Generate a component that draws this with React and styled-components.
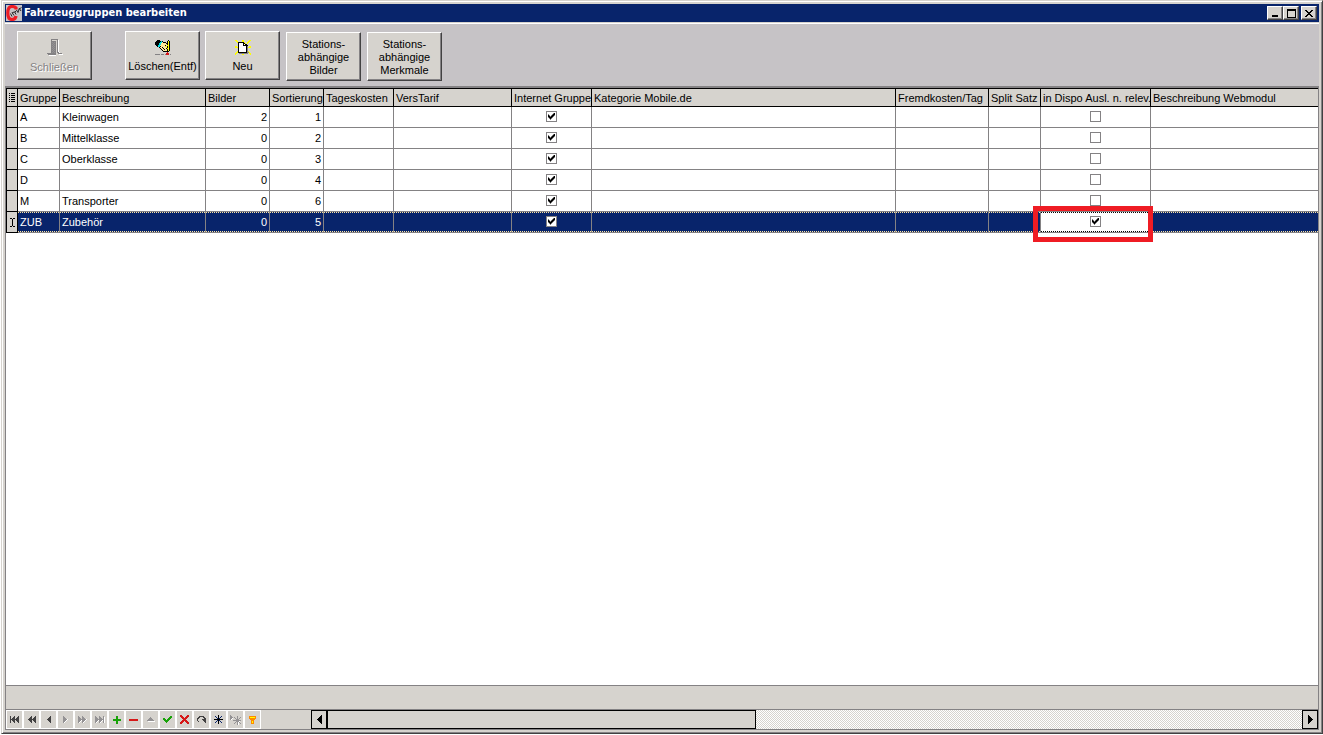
import React from "react";
import styled, { createGlobalStyle, css } from "styled-components";

const face = "#d6d3ce";
const shade = "#848284";
const dark = "#424142";
const navy = "#08246b";

const GlobalStyle = createGlobalStyle`
  *, *::before, *::after { box-sizing: border-box; }
  body {
    margin: 0;
    background: #fff;
    font: 11px/13px "Liberation Sans", Arial, sans-serif;
    color: #000;
  }
  button { font: inherit; color: inherit; padding: 0; margin: 0; }
  svg { display: block; flex: none; }
`;

const Page = styled.div`
  min-height: 100vh;
  display: flex;
  padding: 0 0 1px 1px;
`;

const Window = styled.main`
  flex: 1;
  min-width: 0;
  display: flex;
  flex-direction: column;
  background: ${face};
  border: 1px solid;
  border-color: ${face} ${dark} ${dark} ${face};
  box-shadow: inset 1px 1px #fff, inset -1px -1px ${shade};
  padding: 3px;
`;

const TitleBar = styled.header`
  display: flex;
  align-items: center;
  height: 18px;
  padding: 0 2px 0 1px;
  background: ${navy};
  color: #fff;
`;

const Title = styled.h1`
  flex: 1;
  margin: 0 0 0 2px;
  font: bold 11px/14px "DejaVu Sans Condensed", Tahoma, "DejaVu Sans", sans-serif;
`;

const WindowButton = styled.button`
  width: 16px;
  height: 14px;
  display: grid;
  place-items: center;
  background: ${face};
  border: 1px solid;
  border-color: #fff ${dark} ${dark} #fff;
  box-shadow: inset -1px -1px ${shade};
  margin-left: ${(p) => (p.$apart ? "2px" : "0")};
`;

const Toolbar = styled.div`
  display: flex;
  align-items: flex-start;
  gap: 6px;
  height: 63px;
  margin-top: 1px;
  padding: 7px 12px 0;
  border-top: 1px solid #fff;
  background: #c6c3c6;
`;

const ToolGroup = styled.div`
  display: flex;
  gap: ${(p) => p.$gap};
  padding-top: ${(p) => (p.$lowered ? "1px" : "0")};
`;

const ToolButton = styled.button`
  width: 75px;
  height: 49px;
  display: flex;
  flex-direction: column;
  align-items: center;
  justify-content: center;
  gap: 5px;
  padding-top: 1px;
  background: ${face};
  border: 1px solid;
  border-color: #fff ${dark} ${dark} #fff;
  box-shadow: inset -1px -1px ${shade};
  white-space: nowrap;
  &:disabled {
    color: ${shade};
    text-shadow: 1px 1px #fff;
  }
`;

const GridPane = styled.section`
  flex: 1;
  display: flex;
  flex-direction: column;
  border: 1px solid ${shade};
  border-top-width: 2px;
  min-width: 0;
`;

const TableArea = styled.div`
  flex: 1;
  overflow: hidden;
  background: #fff;
`;

const Table = styled.table`
  width: 100%;
  table-layout: fixed;
  border-collapse: separate;
  border-spacing: 0;
`;

const HeadCell = styled.th`
  height: 19px;
  padding: 1px 0 0 2px;
  text-align: left;
  font-weight: normal;
  white-space: nowrap;
  overflow: hidden;
  background: ${face};
  border: solid #000;
  border-width: 1px 1px 1px 0;
  &:first-child { border-left-width: 1px; padding: 0 0 0 2px; }
  &:last-child { border-right: 0; }
`;

const Cell = styled.td`
  position: relative;
  height: 21px;
  padding: 0 2px;
  text-align: ${(p) => p.$align || "left"};
  white-space: nowrap;
  border: solid ${shade};
  border-width: 0 1px 1px 0;
  &:last-child { border-right: 0; }
`;

const Indicator = styled.th`
  padding: 0;
  background: ${face};
  border: solid #000;
  border-width: 0 1px 1px 1px;
`;

const IndicatorMark = styled.span`
  display: flex;
  justify-content: center;
`;

const dots = (color) => css`
  background-image:
    repeating-linear-gradient(90deg, ${color} 0 1px, transparent 1px 2px),
    repeating-linear-gradient(90deg, ${color} 0 1px, transparent 1px 2px);
  background-size: 100% 1px;
  background-position: 0 0, 0 100%;
  background-repeat: no-repeat;
`;

const Row = styled.tr`
  ${(p) =>
    p.$selected &&
    css`
      color: #fff;
      ${Cell} {
        background-color: ${navy};
        ${dots("#ffe7a5")}
      }
    `}
  && ${Cell}[data-focus="true"] {
    background-color: #fff;
    ${dots("#000")}
  }
`;

const Highlight = styled.div`
  position: absolute;
  z-index: 1;
  inset: -6px -3px -10px -8px;
  border: 5px solid #ef1c24;
  pointer-events: none;
`;

const Check = styled.input`
  appearance: none;
  display: block;
  width: 11px;
  height: 11px;
  margin: 0 auto 2px;
  padding: 1px;
  background: #fff;
  border: 1px solid ${shade};
  &:checked::after {
    content: "";
    display: block;
    width: 7px;
    height: 7px;
    background: #000;
    clip-path: polygon(
      0 2px, 1px 2px, 1px 3px, 2px 3px, 2px 4px, 3px 4px, 3px 3px, 4px 3px, 4px 2px, 5px 2px, 5px 1px, 6px 1px, 6px 0, 7px 0,
      7px 3px, 6px 3px, 6px 4px, 5px 4px, 5px 5px, 4px 5px, 4px 6px, 3px 6px, 3px 7px, 2px 7px, 2px 6px, 1px 6px, 1px 5px, 0 5px
    );
  }
`;

const Summary = styled.div`
  height: 25px;
  background: ${face};
  border: solid ${shade};
  border-width: 1px 0;
`;

const BottomBar = styled.footer`
  display: flex;
  height: 19px;
`;

const Navigator = styled.nav`
  display: flex;
  width: 305px;
  flex: none;
`;

const NavButton = styled.button`
  width: 17px;
  display: grid;
  place-items: center;
  background: ${face};
  border: 1px solid #fff;
`;

const ScrollBar = styled.div`
  flex: 1;
  display: flex;
  background: repeating-conic-gradient(${face} 0 25%, #fff 0 50%) 0 0 / 2px 2px;
`;

const ScrollButton = styled.button`
  width: 16px;
  display: grid;
  place-items: center;
  background: ${face};
  border: 1px solid #000;
`;

const ScrollTrack = styled.div`
  flex: 1;
  display: flex;
`;

const ScrollThumb = styled.div`
  width: 44%;
  background: ${face};
  border: 1px solid #000;
`;

/* Draws an icon from rows of characters, one palette letter for each pixel. */
const palette = {
  k: "#000", w: "#fff", g: "#848284", y: "#ffff00", r: "#d61818", c: "#00dfe7",
  s: "#ffe79c", e: "#18a208", o: "#ff8a00", n: "#08246b", d: "#424142", l: "#949294",
};

function PixelIcon({ rows }) {
  const rects = [];
  rows.forEach((row, y) => {
    let x = 0;
    while (x < row.length) {
      const ch = row[x];
      let end = x + 1;
      while (end < row.length && row[end] === ch) end++;
      if (palette[ch]) rects.push(<rect key={`${x}-${y}`} x={x} y={y} width={end - x} height={1} fill={palette[ch]} />);
      x = end;
    }
  });
  const width = Math.max(...rows.map((r) => r.length));
  return (
    <svg width={width} height={rows.length} viewBox={`0 0 ${width} ${rows.length}`} shapeRendering="crispEdges" aria-hidden="true">
      {rects}
    </svg>
  );
}

const doorIcon = [
  "....ggggggg.....",
  "....g.....gw....",
  "....ggggg.gw....",
  "....glglg.gw....",
  "....gglgg.gw....",
  "....glglg.gw....",
  "....gglgg.gw....",
  "....glglg.gw....",
  "....gglgg.gw....",
  "....glglg.gw....",
  "....gglgg.gw....",
  "....glglg.gw....",
  "....gglgg.gw....",
  "....glglg.ggw...",
  "ggggggggg..gggg.",
  ".gggggggg...wwww",
  "..wwwwwww.......",
];

const eraseIcon = [
  "..kkk........k..",
  ".kkkkkck....kyk.",
  "kkkkkccskkk.kyk.",
  "kkkkccssssskkyk.",
  "kkkkccsssssskyk.",
  ".kkccsssssksyyk.",
  "..kcckssssyskyk.",
  "....kssksssskyk.",
  ".....kssksskyyk.",
  "......kssksskyk.",
  ".......ksssskyk.",
  "........kkkkkk..",
  "............r...",
  "...........rrr..",
  "ggggg.ggg.grrr.g",
];

const newIcon = [
  "yy.....yy.....yy",
  ".yy....yy....yy.",
  "..ykkkkkky..yy..",
  "...kwwwwkky.y...",
  "...kwwwwkwkk....",
  "...kwwwwkkkkk...",
  "yy.kwwwwwwwkg.yy",
  "yyykwwwwwwwkgyyy",
  "...kwwwwwwwkg...",
  "...kwwwwwwwkg...",
  "...kwwwwwwwkg...",
  "..ykwwwwwwwkgy..",
  ".yykkkkkkkkkggy.",
  "yy..ggggggggg.yy",
  "y......yy......y",
];

const columnsIcon = [
  "k.kkkk",
  "......",
  "k.kkkk",
  "......",
  "k.kkkk",
  "......",
  "k.kkkk",
  "......",
  "k.kkkk",
];

const editIcon = ["kk.kk", "..k..", "..k..", "..k..", "..k..", "..k..", "..k..", "..k..", "kk.kk"];

const navItems = [
  ["Erster Datensatz", ["d...d...d", "d..dd..dd", "d.ddd.ddd", "ddddddddd", "d.ddd.ddd", "d..dd..dd", "d...d...d"]],
  ["Vorherige Seite", ["...d...d", "..dd..dd", ".ddd.ddd", "dddddddd", ".ddd.ddd", "..dd..dd", "...d...d"]],
  ["Vorheriger Datensatz", ["...d", "..dd", ".ddd", "dddd", ".ddd", "..dd", "...d"]],
  ["Nächster Datensatz", ["l....", "ll...", "lll..", "llllw", "lllw.", "llw..", "lw..."]],
  ["Nächste Seite", ["l...l....", "ll..ll...", "lll.lll..", "llllllllw", "lllwlllw.", "llw.llw..", "lw..lw..."]],
  ["Letzter Datensatz", ["l...l...l.", "ll..ll..lw", "lll.lll.lw", "lllllllllw", "lllwlllwlw", "llw.llw.lw", "lw..lw..lw"]],
  ["Einfügen", ["...ee...", "...ee...", "...ee...", "eeeeeeee", "eeeeeeee", "...ee...", "...ee...", "...ee..."]],
  ["Löschen", ["rrrrrrrrr", "rrrrrrrrr"]],
  ["Bearbeiten", ["...l....", "..lll...", ".lllll..", "lllllll.", ".wwwwwww"]],
  ["Speichern", [".......ee", "......eee", "ee...eee.", "eee.eee..", ".eeeee...", "..eee....", "...e....."]],
  ["Verwerfen", ["rr.....rr", "rrr...rrr", ".rrr.rrr.", "..rrrrr..", "...rrr...", "..rrrrr..", ".rrr.rrr.", "rrr...rrr", "rr.....rr"]],
  ["Aktualisieren", ["..ddddd..", ".dd...dd.", "dd.....dd", "d....dddd", "d.....ddd", ".d.....dd", "........d"]],
  ["Lesezeichen setzen", ["....k....", ".n..k..n.", "..n.k.n..", "...nkn...", "kkkkkkkkk", "...nkn...", "..n.k.n..", ".n..k..n.", "....k...."]],
  ["Zum Lesezeichen", ["l..........", "ll.....l...", "lll.l..l..l", "llw..l.l.l.", "lw....lll..", "...llllllll", "......lllw.", ".....l.lwl.", "....l..lw.l", ".......lw.."]],
  ["Filter", ["ooooooo", "oyyyyyo", "ooooooo", ".ooooo.", "..ooo..", "..oyo..", "..oyo..", "..ooo.."]],
];

const columns = [
  { key: "gruppe", label: "Gruppe", width: 42 },
  { key: "beschreibung", label: "Beschreibung", width: 146 },
  { key: "bilder", label: "Bilder", width: 64, align: "right" },
  { key: "sortierung", label: "Sortierung", width: 54, align: "right" },
  { key: "tageskosten", label: "Tageskosten", width: 70 },
  { key: "tarif", label: "VersTarif", width: 118 },
  { key: "internet", label: "Internet Gruppe", width: 80, check: true },
  { key: "kategorie", label: "Kategorie Mobile.de", width: 304 },
  { key: "fremdkosten", label: "Fremdkosten/Tag", width: 93 },
  { key: "split", label: "Split Satz", width: 52 },
  { key: "dispo", label: "in Dispo Ausl. n. relev.", width: 110, check: true },
  { key: "webmodul", label: "Beschreibung Webmodul" },
];

const groups = [
  { gruppe: "A", beschreibung: "Kleinwagen", bilder: 2, sortierung: 1, internet: true, dispo: false },
  { gruppe: "B", beschreibung: "Mittelklasse", bilder: 0, sortierung: 2, internet: true, dispo: false },
  { gruppe: "C", beschreibung: "Oberklasse", bilder: 0, sortierung: 3, internet: true, dispo: false },
  { gruppe: "D", beschreibung: "", bilder: 0, sortierung: 4, internet: true, dispo: false },
  { gruppe: "M", beschreibung: "Transporter", bilder: 0, sortierung: 6, internet: true, dispo: false },
  { gruppe: "ZUB", beschreibung: "Zubehör", bilder: 0, sortierung: 5, internet: true, dispo: true, selected: true },
];

function AppLogo() {
  return (
    <svg width="16" height="16" viewBox="0 0 16 16" aria-hidden="true">
      <rect width="16" height="16" fill="#c6c3c6" />
      <path d="M10 4.5V3Q9 1.5 6 1.5Q1.8 1.5 1.8 8Q1.8 14.5 6 14.5Q9.5 14.5 10 11" fill="none" stroke="#ef1c24" strokeWidth="3.2" />
      <path d="M4.5 8.5l1.5 3M6 7.5l2 3M6 8l2-1M8.5 6.5l1.5 3M8.5 7.5l2-2M10.5 5l1.5 2.500 1-3M13 3l2 3M12.5 4.5l3-2" fill="none" stroke="#292829" strokeWidth="1" />
    </svg>
  );
}

function Arrow({ right }) {
  return <PixelIcon rows={right
    ? ["k....", "kk...", "kkk..", "kkkk.", "kkkkk", "kkkk.", "kkk..", "kk...", "k...."]
    : ["....k", "...kk", "..kkk", ".kkkk", "kkkkk", ".kkkk", "..kkk", "...kk", "....k"]} />;
}

export default function App() {
  return (
    <Page>
      <GlobalStyle />
      <Window>
        <TitleBar>
          <AppLogo />
          <Title>Fahrzeuggruppen bearbeiten</Title>
          <WindowButton aria-label="Minimieren">
            <PixelIcon rows={["........", "........", "........", "........", "........", "........", ".kkkkkk.", ".kkkkkk."]} />
          </WindowButton>
          <WindowButton aria-label="Maximieren">
            <PixelIcon rows={["kkkkkkkkk", "kkkkkkkkk", "k.......k", "k.......k", "k.......k", "k.......k", "k.......k", "k.......k", "kkkkkkkkk"]} />
          </WindowButton>
          <WindowButton $apart aria-label="Fenster schließen">
            <PixelIcon rows={["kk....kk", ".kk..kk.", "..kkkk..", "...kk...", "..kkkk..", ".kk..kk.", "kk....kk"]} />
          </WindowButton>
        </TitleBar>

        <Toolbar>
          <ToolGroup $gap="33px">
            <ToolButton disabled><PixelIcon rows={doorIcon} />Schließen</ToolButton>
            <ToolGroup $gap="5px">
              <ToolButton><PixelIcon rows={eraseIcon} />Löschen(Entf)</ToolButton>
              <ToolButton><PixelIcon rows={newIcon} />Neu</ToolButton>
            </ToolGroup>
          </ToolGroup>
          <ToolGroup $gap="6px" $lowered>
            <ToolButton><span>Stations-<br />abhängige<br />Bilder</span></ToolButton>
            <ToolButton><span>Stations-<br />abhängige<br />Merkmale</span></ToolButton>
          </ToolGroup>
        </Toolbar>

        <GridPane>
          <TableArea>
            <Table>
              <colgroup>
                <col width={12} />
                {columns.map((c) => <col key={c.key} width={c.width} />)}
              </colgroup>
              <thead>
                <tr>
                  <HeadCell aria-label="Spaltenauswahl"><PixelIcon rows={columnsIcon} /></HeadCell>
                  {columns.map((c) => <HeadCell key={c.key} scope="col">{c.label}</HeadCell>)}
                </tr>
              </thead>
              <tbody>
                {groups.map((g) => (
                  <Row key={g.gruppe} $selected={g.selected}>
                    <Indicator aria-label={g.selected ? "In Bearbeitung" : undefined}>
                      {g.selected && <IndicatorMark><PixelIcon rows={editIcon} /></IndicatorMark>}
                    </Indicator>
                    {columns.map((c) => {
                      const focused = Boolean(g.selected && c.key === "dispo");
                      return (
                        <Cell key={c.key} $align={c.align} data-focus={focused}>
                          {c.check ? (
                            <Check type="checkbox" defaultChecked={g[c.key]} aria-label={`${c.label} ${g.gruppe}`} />
                          ) : (
                            g[c.key]
                          )}
                          {focused && <Highlight />}
                        </Cell>
                      );
                    })}
                  </Row>
                ))}
              </tbody>
            </Table>
          </TableArea>
          <Summary />
          <BottomBar>
            <Navigator aria-label="Datensatznavigation">
              {navItems.map(([label, rows]) => (
                <NavButton key={label} aria-label={label}><PixelIcon rows={rows} /></NavButton>
              ))}
            </Navigator>
            <ScrollBar>
              <ScrollButton aria-label="Nach links"><Arrow /></ScrollButton>
              <ScrollTrack><ScrollThumb /></ScrollTrack>
              <ScrollButton aria-label="Nach rechts"><Arrow right /></ScrollButton>
            </ScrollBar>
          </BottomBar>
        </GridPane>
      </Window>
    </Page>
  );
}
